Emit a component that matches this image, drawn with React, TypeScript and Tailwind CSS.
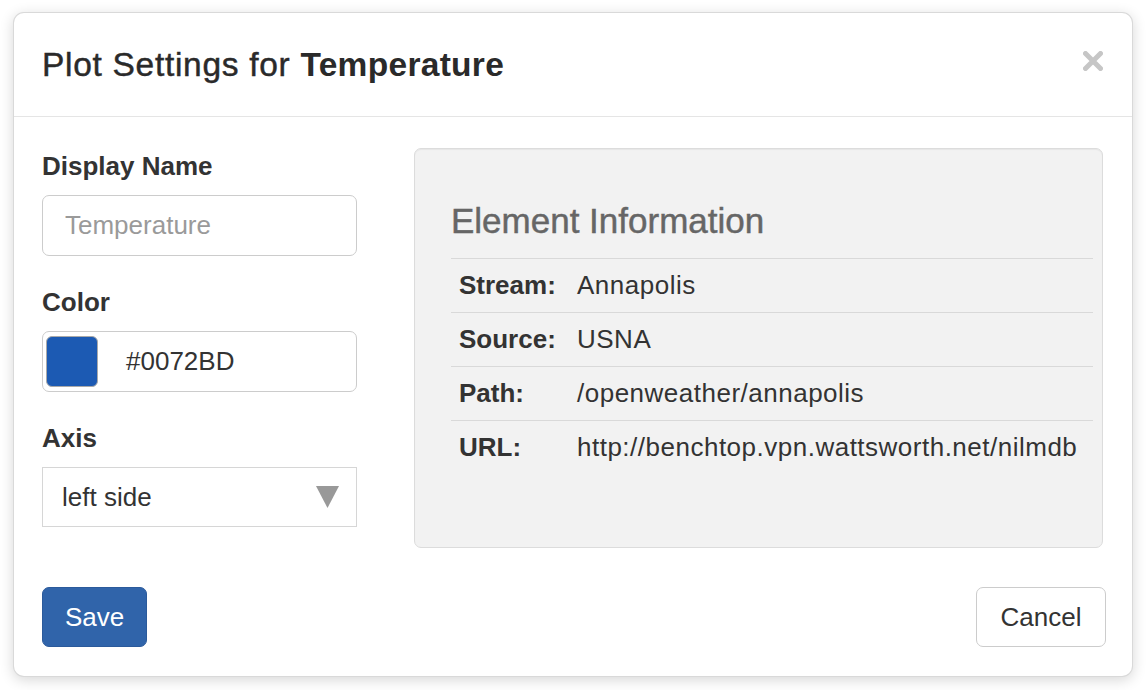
import React from "react";

const font = { fontFamily: '"Liberation Sans", Arial, Helvetica, sans-serif' };

function Row({ label, value }: { label: string; value: string }) {
  return (
    <tr className="border-t border-[#d9d9d9]">
      <td className="w-[125px] pl-[8px] pr-[8px] py-[8px] font-bold leading-[37px] align-top">{label}</td>
      <td className="pl-[1px] pr-[12px] py-[8px] leading-[37px] tracking-[0.5px] whitespace-nowrap align-top">{value}</td>
    </tr>
  );
}

export default function App() {
  return (
    <div className="w-[1146px] h-[690px] bg-white pt-[12px] pl-[13px] text-[#333]" style={font}>
      <div className="w-[1120px] h-[665px] bg-white border border-black/15 rounded-[11px] shadow-[0_3px_14px_rgba(0,0,0,0.16)] flex flex-col">
        {/* header */}
        <div className="h-[104px] shrink-0 border-b border-[#e5e5e5] px-[28px] pt-[28px] flex justify-between items-start">
          <h4 className="text-[33.5px] leading-[48px] text-[#2a2a2a]">
            <span className="tracking-[0.7px] [-webkit-text-stroke:0.45px]">Plot Settings for </span>
            <span className="font-bold tracking-[0.3px]">Temperature</span>
          </h4>
          <button className="mt-[10px] mr-[1px] w-[20px] h-[20px] flex items-center justify-center" aria-label="Close">
            <svg width="20" height="20" viewBox="0 0 20 20">
              <path d="M2.5 2.5 L17.5 17.5 M17.5 2.5 L2.5 17.5" stroke="#c6c6c6" strokeWidth="5" strokeLinecap="round" />
            </svg>
          </button>
        </div>

        {/* body */}
        <div className="h-[442px] shrink-0 px-[28px] pt-[31px] flex items-start gap-[57px] text-[26px]">
          <div className="w-[315px] flex flex-col gap-[28px]">
            <div>
              <label className="block font-bold leading-[37px] mb-[10px]">Display Name</label>
              <input
                readOnly
                placeholder="Temperature"
                className="w-full h-[61px] border border-[#cccccc] rounded-[7px] pl-[22px] text-[26px] placeholder:text-[#9a9a9a] outline-none bg-white"
                style={font}
              />
            </div>
            <div>
              <label className="block font-bold leading-[37px] mb-[10px]">Color</label>
              <div className="w-full h-[61px] border border-[#cccccc] rounded-[7px] flex items-center pl-[3px]">
                <div className="w-[52px] h-[51px] rounded-[6px] bg-[#1c5ab3] border border-[#a9a9a9]" />
                <span className="ml-[28px] leading-[37px]">#0072BD</span>
              </div>
            </div>
            <div>
              <label className="block font-bold leading-[37px] mb-[10px]">Axis</label>
              <div className="w-full h-[60px] border border-[#d6d6d6] bg-white flex items-center justify-between pl-[19px] pr-[17px]">
                <span className="leading-[37px]">left side</span>
                <svg width="23" height="22" viewBox="0 0 23 22">
                  <polygon points="0,0 23,0 11.5,22" fill="#999999" />
                </svg>
              </div>
            </div>
          </div>

          <div className="w-[689px] h-[400px] bg-[#f2f2f2] border border-[#dcdcdc] rounded-[7px] shadow-[inset_0_1px_1px_rgba(0,0,0,0.05)] px-[36px] pt-[35px]">
            <h4 className="text-[35px] leading-[38px] mt-[18px] mb-[18px] text-[#666666] [-webkit-text-stroke:0.45px]">Element Information</h4>
            <table className="w-[642px] border-collapse">
              <tbody>
                <Row label="Stream:" value="Annapolis" />
                <Row label="Source:" value="USNA" />
                <Row label="Path:" value="/openweather/annapolis" />
                <Row label="URL:" value="http://benchtop.vpn.wattsworth.net/nilmdb" />
              </tbody>
            </table>
          </div>
        </div>

        {/* footer */}
        <div className="px-[28px] pt-[28px] flex justify-between items-start text-[26px]">
          <button className="h-[60px] px-[22px] bg-[#3064aa] border border-[#2b5a9b] rounded-[7px] text-white leading-[37px]" style={font}>
            Save
          </button>
          <button className="h-[60px] w-[130px] bg-white border border-[#cccccc] rounded-[7px] text-[#333] leading-[37px] -mr-[2px]" style={font}>
            Cancel
          </button>
        </div>
      </div>
    </div>
  );
}
